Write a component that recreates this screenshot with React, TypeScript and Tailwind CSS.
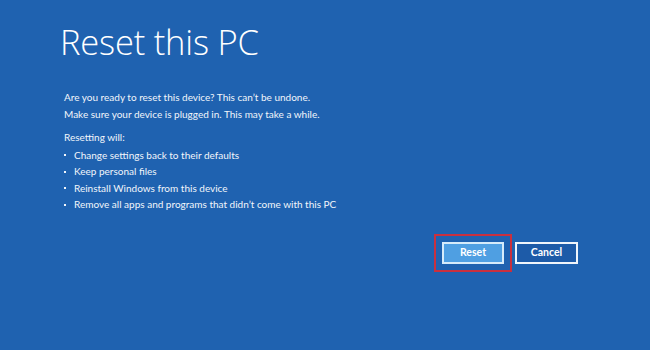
import React from "react";

export default function App() {
  const bullets = [
    "Change settings back to their defaults",
    "Keep personal files",
    "Reinstall Windows from this device",
    "Remove all apps and programs that didn’t come with this PC",
  ];
  return (
    <div
      className="w-[650px] h-[350px] bg-[#1f62b0] text-white flex flex-col overflow-hidden"
      style={{ fontFamily: '"Open Sans", "Noto Sans", sans-serif' }}
    >
      <div className="pl-[60px] pt-[22px]">
        <h1 className="text-[34.5px] leading-[40px] font-light tracking-[-0.2px]">Reset this PC</h1>
      </div>
      <div
        className="pl-[64px] pt-[27px] text-[10px] leading-[16.5px] text-[#f2f6fb]"
        style={{ fontFamily: 'Lato, "Open Sans", sans-serif' }}
      >
        <p>Are you ready to reset this device? This can’t be undone.</p>
        <p>Make sure your device is plugged in. This may take a while.</p>
        <p className="mt-[7px]">Resetting will:</p>
        <ul className="mt-[1px]">
          {bullets.map((b) => (
            <li key={b} className="flex items-center">
              <span className="w-[10px] shrink-0 flex">
                <span className="w-[2px] h-[2px] bg-[#f2f6fb] ml-[0px] mt-[1px]" />
              </span>
              <span>{b}</span>
            </li>
          ))}
        </ul>
      </div>
      <div className="flex justify-end items-center pr-[72px] mt-[21px]">
        <div className="border-2 border-[#c9303e] px-[6px] py-[6px]">
          <button
            className="w-[62px] h-[22px] bg-[#4f9fe2] border-2 border-[#d6ebfa] text-[10.5px] font-bold text-white flex items-center justify-center"
            style={{ fontFamily: 'Lato, "Open Sans", sans-serif' }}
          >
            Reset
          </button>
        </div>
        <button
          className="ml-[3px] w-[63px] h-[22px] bg-[#1d5ba8] border-2 border-[#f0f5fb] text-[10.5px] font-bold text-white flex items-center justify-center"
          style={{ fontFamily: 'Lato, "Open Sans", sans-serif' }}
        >
          Cancel
        </button>
      </div>
    </div>
  );
}
